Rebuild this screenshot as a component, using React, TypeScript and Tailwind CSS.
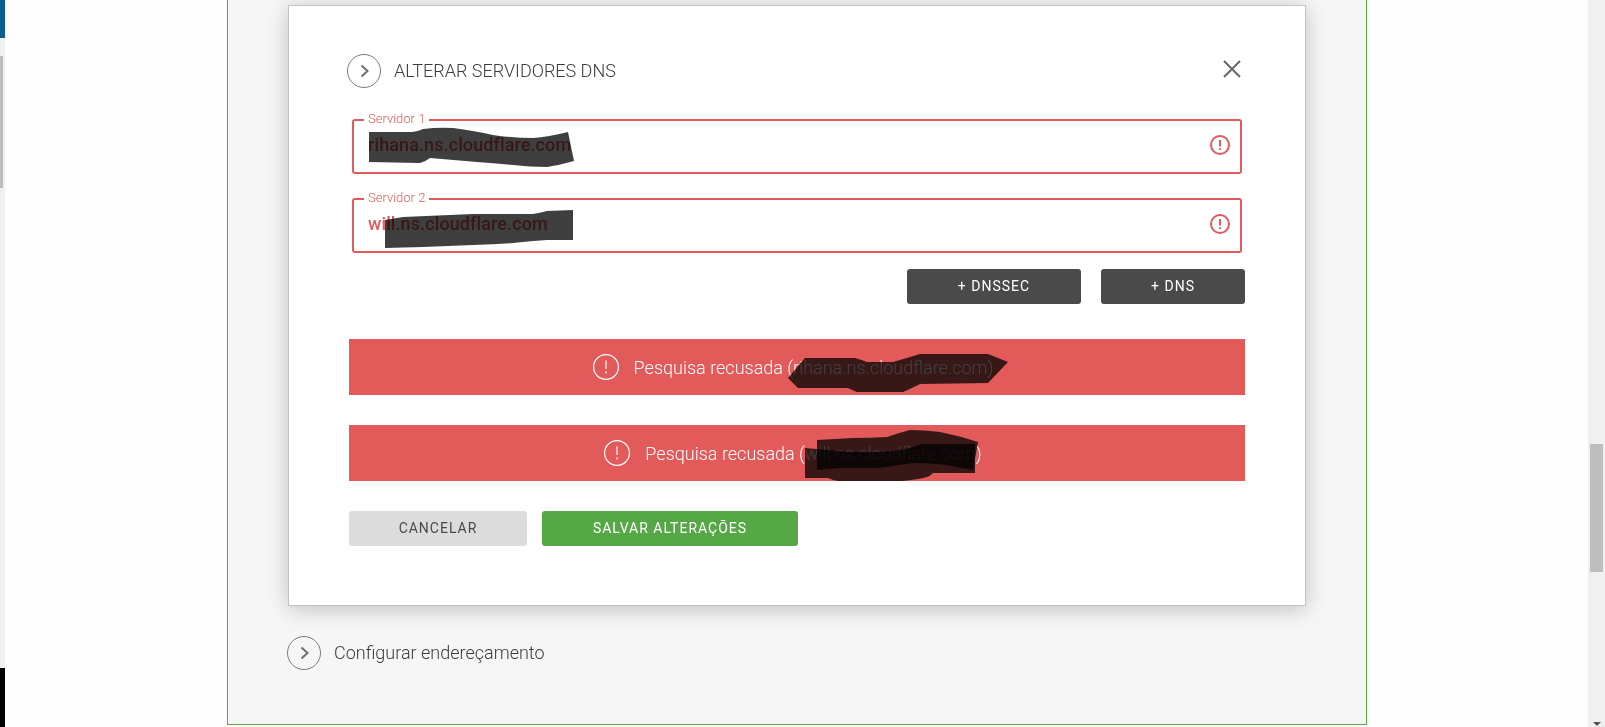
import React from "react";

function Scribble({ box, d }: { box: [number, number, number, number]; d: string }) {
  const [x, y, w, h] = box;
  return (
    <svg
      className="absolute inset-0 mix-blend-multiply pointer-events-none"
      width={w}
      height={h}
      viewBox={`${x} ${y} ${w} ${h}`}
    >
      <path d={d} fill="#3f3f3f" />
    </svg>
  );
}

function ChevronCircle() {
  return (
    <svg width="34" height="34" viewBox="0 0 34 34" fill="none" className="shrink-0">
      <circle cx="17" cy="17" r="16.5" stroke="#7a7a7a" strokeWidth="1" />
      <path d="M14.5 11.5 L20.5 17 L14.5 22.5" stroke="#6f6f6f" strokeWidth="2" />
    </svg>
  );
}

function AlertCircle({ size, color, sw }: { size: number; color: string; sw: number }) {
  const c = size / 2;
  return (
    <svg width={size} height={size} viewBox={`0 0 ${size} ${size}`} fill="none" className="shrink-0">
      <circle cx={c} cy={c} r={c - sw / 2} stroke={color} strokeWidth={sw} />
      <path d={`M${c} ${size * 0.25} V${size * 0.58}`} stroke={color} strokeWidth={sw} />
      <path d={`M${c} ${size * 0.66} V${size * 0.75}`} stroke={color} strokeWidth={sw} />
    </svg>
  );
}

function Field({ label, value, box, d }: { label: string; value: string; box: [number, number, number, number]; d: string }) {
  return (
    <div className="relative h-[55px] ml-[5px] mr-[3px] border-2 border-[#e25a5a] rounded-[3px] flex items-center pl-[14px] pr-[10px]">
      <span className="absolute left-[10px] top-[-9px] bg-white px-1 text-[13px] leading-[14px] font-light text-[#e25a5a]">{label}</span>
      <span className="flex-1 text-[18px] font-medium tracking-[0.1px] text-[#e25a5a] -mt-[4px]">{value}</span>
      <span className="-mt-[3px]"><AlertCircle size={20} color="#e25a5a" sw={2} /></span>
      <Scribble box={box} d={d} />
    </div>
  );
}

function Banner({ text, children }: { text: string; children: React.ReactNode }) {
  return (
    <div className="relative h-[56px] ml-[2px] bg-[#e25a5a] flex items-center justify-center pr-[8px] text-white text-[18px] font-light gap-[15px]">
      <AlertCircle size={26} color="#ffffff" sw={1.2} />
      <span>{text}</span>
      {children}
    </div>
  );
}

export default function App() {
  return (
    <div className="h-[727px] w-[1605px] overflow-hidden flex bg-[#fefefe] font-['Roboto',sans-serif]">
      <div className="w-[5px] h-full flex flex-col bg-[#f0f0f0]">
        <div className="h-[38px] bg-[#0b5f8f]" />
        <div className="mt-[18px] h-[132px] w-[3px] bg-[#bdbdbd]" />
        <div className="mt-auto h-[59px] bg-black" />
      </div>

      <div className="flex-1 pl-[222px]">
        <div className="w-[1140px] h-[725px] bg-[#f6f6f6] border-x border-b border-[#5aa845] pt-[5px] pl-[60px]">
          <div className="w-[1018px] h-[601px] bg-white border border-[#c4c4c4] shadow-[0_3px_20px_rgba(0,0,0,0.22)] pt-[48px] pl-[58px] pr-[60px]">
            <div className="flex items-center h-[34px]">
              <ChevronCircle />
              <span className="ml-[13px] -mt-[2px] text-[18px] font-light text-[#3c3c3c]">ALTERAR SERVIDORES DNS</span>
              <svg className="ml-auto mr-[4px] -mt-[5px]" width="18" height="18" viewBox="0 0 18 18" fill="none">
                <path d="M1 1 L17 17 M17 1 L1 17" stroke="#666666" strokeWidth="2" />
              </svg>
            </div>

            <div className="mt-[31px] flex flex-col gap-[24px]">
              <Field
                label="Servidor 1"
                value="rihana.ns.cloudflare.com"
                box={[354, 121, 886, 51]}
                d="M369 132 L412 132 Q417 132 423 129 Q438 127 453 128 Q475 131 493 135 Q513 138 533 138 Q548 137 568 132 L574 161 Q560 165 547 167 Q530 167 513 165 Q495 163 477 162 L430 158 Q425 162 420 163 L369 162 Z"
              />
              <Field
                label="Servidor 2"
                value="will.ns.cloudflare.com"
                box={[354, 200, 886, 51]}
                d="M385 220 L403 217 L473 214 L533 214 Q540 213 547 211 L573 210 L573 240 L547 240 Q530 241 513 243 Q495 244 473 245 L423 247 L385 248 Z"
              />
            </div>

            <div className="mt-[16px] flex justify-end gap-[20px]">
              <button className="w-[174px] h-[35px] rounded-[3px] bg-[#4a4a4a] text-white text-[14px] tracking-[1px]">+ DNSSEC</button>
              <button className="w-[144px] h-[35px] rounded-[3px] bg-[#4a4a4a] text-white text-[14px] tracking-[1px]">+ DNS</button>
            </div>

            <div className="mt-[35px] flex flex-col gap-[30px]">
              <Banner text="Pesquisa recusada (rihana.ns.cloudflare.com)">
                <Scribble
                  box={[349, 339, 896, 56]}
                  d="M788 378 L805 358 L855 358 Q862 360 867 362 L893 362 Q907 358 920 354 L988 354 L1008 362 L988 383 L920 384 Q910 389 903 392 L857 392 Q852 390 848 388 L798 388 Z"
                />
              </Banner>
              <Banner text="Pesquisa recusada (will.ns.cloudflare.com)">
                <Scribble
                  box={[349, 425, 896, 56]}
                  d="M817 440 L853 438 Q870 438 887 437 Q898 433 910 430 Q925 430 940 432 Q960 436 978 442 L973 470 Q960 468 947 465 Q930 463 913 463 Q897 465 880 468 L840 468 L817 470 Z"
                />
                <Scribble
                  box={[349, 425, 896, 56]}
                  d="M805 448 L850 452 L877 452 Q895 451 910 448 Q917 445 923 444 L975 444 L975 473 L933 473 Q930 476 927 477 Q915 480 900 481 L838 481 Q832 480 828 478 L805 478 Z"
                />
              </Banner>
            </div>

            <div className="mt-[30px] ml-[2px] flex gap-[15px]">
              <button className="w-[178px] h-[35px] rounded-[3px] bg-[#dcdcdc] text-[#4a4a4a] text-[14px] tracking-[1px]">CANCELAR</button>
              <button className="w-[256px] h-[35px] rounded-[3px] bg-[#55a845] text-white text-[14px] tracking-[1px]">SALVAR ALTERAÇÕES</button>
            </div>
          </div>

          <div className="mt-[30px] flex items-center -ml-[1px]">
            <ChevronCircle />
            <span className="ml-[13px] -mt-[2px] text-[18px] font-light text-[#3c3c3c]">Configurar endereçamento</span>
          </div>
        </div>
      </div>

      <div className="w-[17px] h-full bg-[#f0f0f0] flex flex-col items-center pt-[444px] pb-[1px]">
        <div className="w-[13px] h-[128px] bg-[#bdbdbd]" />
        <svg className="mt-auto" width="8" height="4" viewBox="0 0 8 4">
          <path d="M0 0 H8 L4 4 Z" fill="#505050" />
        </svg>
      </div>
    </div>
  );
}
